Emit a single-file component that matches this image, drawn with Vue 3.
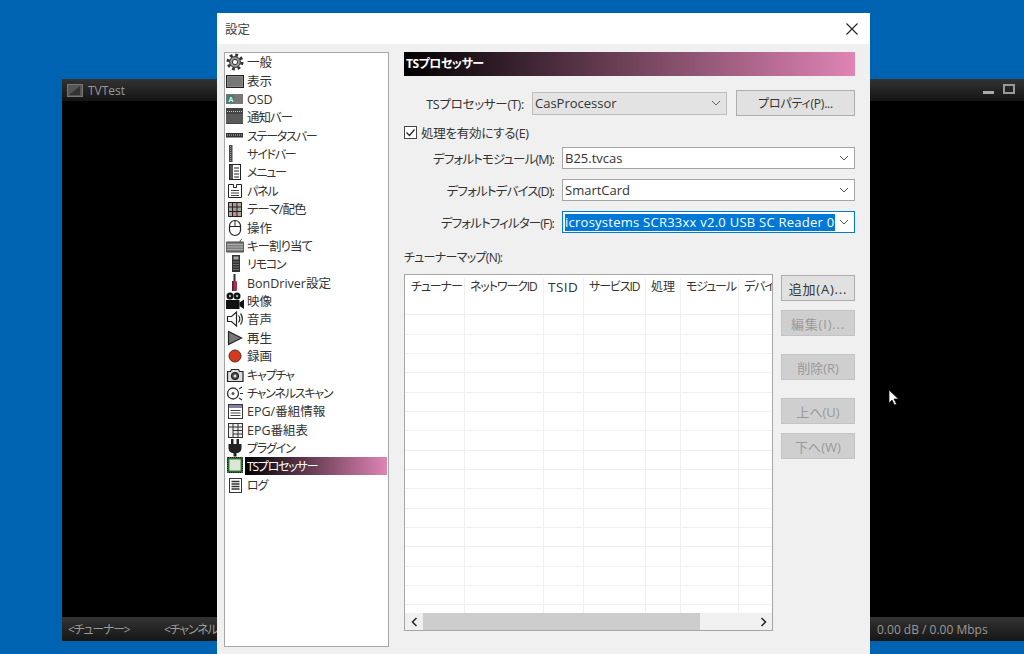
<script setup>
const d = 'stroke="#2b2b2b" fill="none"'
const icons = {
  gear: `<circle cx="9" cy="9" r="7" fill="none" stroke="#333" stroke-width="3" stroke-dasharray="2.8 2.7"/><circle cx="9" cy="9" r="5.4" fill="#999" stroke="#333"/><circle cx="9" cy="9" r="2.6" fill="#fff" stroke="#333"/>`,
  monitor: `<rect x=".5" y="3.500" width="17" height="12" fill="#8a8a8a" stroke="#222"/><rect x="2" y="5" width="14" height="9" fill="#777"/>`,
  osd: `<rect y="4" width="17" height="10" fill="#777"/><rect x="1" y="5" width="7" height="8" fill="#3f7f78"/><text x="2.500" y="12" font-size="7" font-weight="700" fill="#cfe">A</text>`,
  notify: `<rect y="0" width="17" height="16" fill="#444"/><path d="M1 3.500h15" stroke="#ccc" stroke-dasharray="1 1"/><rect y="6" width="17" height="9" fill="#5a5a5a"/>`,
  status: `<rect y="6" width="17" height="4.500" fill="#333"/><path d="M1 8h15" stroke="#ccc" stroke-dasharray="1 1"/>`,
  side: `<rect x="3" y="0" width="3.500" height="17" fill="#444"/><path d="M4.700 1v15" stroke="#bbb" stroke-dasharray="1 1"/>`,
  menu: `<rect x="3.500" y="1.500" width="11" height="15" fill="#fff" stroke="#222"/><rect x="4" y="2" width="3" height="14" fill="#555"/><path d="M8 5h5M8 8h5M8 11h5M8 14h5" stroke="#222"/>`,
  panel: `<path d="M2.500 2.500h5v3h3v-3h5v13h-13z" fill="#fff" stroke="#222"/><path d="M5 8.500h8M5 11h8M5 13.500h8" stroke="#444"/>`,
  theme: `<rect x="2.500" y="2.500" width="13" height="14" fill="#b8a58f" stroke="#222"/><rect x="3" y="7" width="12" height="4.500" fill="#8fb3a0"/><rect x="7" y="3" width="4" height="13" fill="#b88f96"/><path d="M6.500 2.500v14M11 2.500v14M2.500 7h13M2.500 11.500h13" stroke="#222"/>`,
  mouse: `<rect x="3.500" y="1.500" width="11" height="15" rx="5.500" fill="#fff" stroke="#222" stroke-width="1.200"/><path d="M3.500 7.500h11M9 1.500v6" stroke="#222"/>`,
  keys: `<rect y="5" width="18" height="10" rx="1" fill="#7c7c7c" stroke="#444"/><path d="M1.500 7.500h15M1.500 10h15M1.500 12.500h15" stroke="#ddd" stroke-dasharray="1 1"/><path d="M14 5c0-2 1-2 2-3" stroke="#444" fill="none"/>`,
  remote: `<rect x="6" y="0" width="8" height="17" fill="#333"/><rect x="7.500" y="1.500" width="5" height="3" fill="#aaa"/><path d="M7.500 7h5M7.500 9.500h5M7.500 12h5M7.500 14.500h5" stroke="#aaa" stroke-dasharray="1 1"/>`,
  bon: `<rect x="7.500" y="0" width="2" height="7" fill="#333"/><rect x="6" y="7" width="5" height="10" rx="1" fill="#a3324e"/><rect x="6" y="7" width="1.500" height="10" fill="#5c1a2a"/>`,
  video: `<circle cx="4" cy="4" r="3.500" fill="#111"/><circle cx="11" cy="4" r="3.500" fill="#111"/><circle cx="4" cy="4" r="1.200" fill="#aaa"/><circle cx="11" cy="4" r="1.200" fill="#aaa"/><rect y="8" width="13.500" height="9" fill="#111"/><path d="M13.500 10.500l4.500-3v9.500l-4.500-3z" fill="#111"/>`,
  sound: `<path d="M1.500 6.500h4l5-4.500v14l-5-4.500h-4z" fill="#fff" stroke="#222" stroke-width="1.200"/><path d="M12.500 5.500c1.500 2 1.500 5 0 7M14.500 3.500c2.500 3 2.500 8 0 11" ${d} stroke-width="1.200"/>`,
  play: `<path d="M2.500 2.500v13l13-6.500z" fill="#777" stroke="#222" stroke-width="1.200"/>`,
  rec: `<circle cx="9" cy="9" r="6" fill="#d63a1e" stroke="#4a2a22"/>`,
  camera: `<path d="M1.500 5.500h3l1-2h7l1 2h3.500v10h-15.500z" fill="#ddd" stroke="#222" stroke-width="1.200"/><circle cx="9" cy="10" r="3.700" fill="#444" stroke="#222"/><circle cx="9" cy="10" r="1.500" fill="#ddd"/>`,
  dish: `<circle cx="7" cy="9.500" r="5.500" fill="#fff" stroke="#333" stroke-width="1.300"/><circle cx="7" cy="9.500" r="1.500" fill="#555"/><path d="M13 5l3-2M14 9.500h3M13 14l3 2" stroke="#333" stroke-width="1.200"/>`,
  info: `<rect x="2.500" y="2.500" width="14" height="14" fill="#fff" stroke="#333"/><rect x="3" y="3" width="13" height="3" fill="#8a7ca8"/><path d="M4.500 8.500h10M4.500 11h10M4.500 13.500h10" stroke="#444"/>`,
  table: `<rect x="2.500" y="2.500" width="14" height="14" fill="#eee" stroke="#333"/><path d="M7 2.500v14M12 2.500v14M2.500 6h14M7 9.500h9M7 13h9" stroke="#333"/>`,
  plug: `<rect x="5" y="0" width="2.500" height="5" fill="#222"/><rect x="10.500" y="0" width="2.500" height="5" fill="#222"/><path d="M2.500 5h13v4c0 3-2 5-5 5v3.500h-3v-3.500c-3 0-5-2-5-5z" fill="#222"/>`,
  chip: `<rect x="1.500" y=".5" width="15" height="15" fill="#1d5a20" stroke="#111" stroke-dasharray="1.500 .6"/><rect x="3" y="2" width="12" height="12" fill="#dbe6d8" stroke="#2f8a2f"/>`,
  log: `<rect x="3.500" y="2.500" width="12" height="14" fill="#fff" stroke="#333"/><path d="M5.500 5.500h8M5.500 8h8M5.500 10.500h8M5.500 13h8" stroke="#333" stroke-width="1.300"/>`
}
const items = [
  ['一般', 'gear'], ['表示', 'monitor'], ['OSD', 'osd'], ['通知バー', 'notify'], ['ステータスバー', 'status'],
  ['サイドバー', 'side'], ['メニュー', 'menu'], ['パネル', 'panel'], ['テーマ/配色', 'theme'], ['操作', 'mouse'],
  ['キー割り当て', 'keys'], ['リモコン', 'remote'], ['BonDriver設定', 'bon'], ['映像', 'video'], ['音声', 'sound'],
  ['再生', 'play'], ['録画', 'rec'], ['キャプチャ', 'camera'], ['チャンネルスキャン', 'dish'], ['EPG/番組情報', 'info'],
  ['EPG番組表', 'table'], ['プラグイン', 'plug'], ['TSプロセッサー', 'chip'], ['ログ', 'log']
]
const hasKana = (s) => /[\u30a0-\u30ff]/.test(s)
const hasKanji = (s) => /[\u4e00-\u9fff]/.test(s)
const textClass = (s) => ({
  narrow: hasKana(s) && !hasKanji(s),
  mixed: hasKana(s) && hasKanji(s)
})
const selects = [
  { label: 'デフォルトモジュール(M):', value: 'B25.tvcas' },
  { label: 'デフォルトデバイス(D):', value: 'SmartCard' },
  { label: 'デフォルトフィルター(F):', value: 'icrosystems SCR33xx v2.0 USB SC Reader 0', focus: true }
]
const columns = ['チューナー', 'ネットワークID', 'TSID', 'サービスID', '処理', 'モジュール', 'デバイス']
const rows = Array.from({ length: 17 })
const side = [
  { text: '追加(A)...', top: 1, ell: true },
  { text: '編集(I)...', top: 9, off: true, ell: true },
  { text: '削除(R)', top: 18, off: true },
  { text: '上へ(U)', top: 18, off: true },
  { text: '下へ(W)', top: 9, off: true }
]
</script>

<template>
  <div class="desktop">
    <div class="tv">
      <div class="tv-title">
        <svg class="tv-icon" width="16" height="13" viewBox="0 0 16 13"><rect x=".5" y=".5" width="15" height="12" fill="#555" stroke="#777"/><path d="M2 11l11-9v9z" fill="#333"/></svg>
        <span>TVTest</span>
        <span class="tv-min"></span>
        <span class="tv-max"></span>
      </div>
      <div class="tv-video"></div>
      <div class="tv-status">
        <span class="st-a narrow">&lt;チューナー&gt;</span>
        <span class="narrow">&lt;チャンネル</span>
        <span class="st-r">0.00 dB / 0.00 Mbps</span>
      </div>
    </div>

    <svg class="cursor" width="12" height="17" viewBox="0 0 12 17"><path d="M1 1v13l3-3 2.500 5 2-1-2.500-5h4.500z" fill="#fff" stroke="#111" stroke-width=".7"/></svg>

    <div class="dialog">
      <div class="dlg-title">
        <span>設定</span>
        <svg width="12" height="12" viewBox="0 0 12 12"><path d="M.5.500l11 11M11.500.500l-11 11" stroke="#222" stroke-width="1.100"/></svg>
      </div>
      <div class="dlg-body">
        <ul class="nav">
          <li v-for="it in items" :key="it[0]" class="nav-item">
            <svg class="nav-icon" width="18" height="18" viewBox="0 0 18 18" v-html="icons[it[1]]"></svg>
            <span class="nav-text" :class="[textClass(it[0]), { sel: it[1] === 'chip' }]">{{ it[0] }}</span>
          </li>
        </ul>

        <div class="pane">
          <div class="pane-head">TSプロセッサー</div>

          <div class="row-top">
            <label class="lbl lbl-top">TSプロセッサー(T):</label>
            <div class="combo combo-off">
              <span>CasProcessor</span>
              <svg width="10" height="6" viewBox="0 0 10 6"><path d="M1 1l4 4 4-4" fill="none" stroke="#666"/></svg>
            </div>
            <button class="btn btn-prop">プロパティ(P)...</button>
          </div>

          <div class="check">
            <svg width="13" height="13" viewBox="0 0 13 13"><rect x=".5" y=".5" width="12" height="12" fill="#fff" stroke="#444"/><path d="M2.500 6.500l3 3 5-6" fill="none" stroke="#222" stroke-width="1.200"/></svg>
            <span>処理を有効にする(E)</span>
          </div>

          <div v-for="s in selects" :key="s.label" class="row">
            <label class="lbl">{{ s.label }}</label>
            <div class="combo" :class="{ focus: s.focus }">
              <span :class="{ hilite: s.focus }">{{ s.value }}</span>
              <svg width="10" height="6" viewBox="0 0 10 6"><path d="M1 1l4 4 4-4" fill="none" stroke="#555"/></svg>
            </div>
          </div>

          <div class="map-label">チューナーマップ(N):</div>

          <div class="map">
            <div class="lv">
              <div class="lv-grid">
                <div class="lv-row lv-head">
                  <span v-for="c in columns" :key="c" class="lv-cell" :class="hasKana(c) ? 'tight' : hasKanji(c) ? '' : 'wide'">{{ c }}</span>
                </div>
                <div v-for="(r, i) in rows" :key="i" class="lv-row lv-line">
                  <span v-for="c in columns" :key="c" class="lv-cell"></span>
                </div>
              </div>
              <div class="sb">
                <span class="sb-arrow"><svg width="7" height="10" viewBox="0 0 7 10"><path d="M5.500 1l-4 4 4 4" fill="none" stroke="#222" stroke-width="1.500"/></svg></span>
                <span class="sb-track"><span class="sb-thumb"></span></span>
                <span class="sb-arrow"><svg width="7" height="10" viewBox="0 0 7 10"><path d="M1.500 1l4 4-4 4" fill="none" stroke="#222" stroke-width="1.500"/></svg></span>
              </div>
            </div>
            <div class="side">
              <button v-for="b in side" :key="b.text" class="btn btn-side" :class="{ off: b.off, ell: b.ell }" :style="{ marginTop: b.top + 'px' }">{{ b.text }}</button>
            </div>
          </div>
        </div>
      </div>
    </div>
  </div>
</template>

<style>
html, body { margin: 0; padding: 0; background: #0063b1; }
</style>

<style scoped>
.desktop {
  position: relative;
  width: 1024px;
  height: 654px;
  overflow: hidden;
  background: #0063b1;
  font-family: "Open Sans", "Noto Sans CJK JP", sans-serif;
  font-feature-settings: "palt";
  font-size: 12.5px;
  color: #222;
}
.narrow { font-size: 12px; letter-spacing: -1.2px; }
.mixed { letter-spacing: -1px; }

.tv {
  position: absolute;
  left: 62px;
  top: 79px;
  width: 962px;
  height: 562px;
  display: flex;
  flex-direction: column;
  background: #000;
  color: #a8a8a8;
  font-size: 12px;
}
.tv-title {
  height: 22px;
  display: flex;
  align-items: center;
  padding: 0 9px 0 5px;
  background: linear-gradient(#333, #141414);
  color: #999;
}
.tv-icon { margin-right: 5px; }
.tv-min { width: 11px; height: 3px; margin: 4px 9px 0 auto; background: #aaa; }
.tv-max { width: 8px; height: 6px; border: 2px solid #999; margin-bottom: 2px; }
.tv-video { flex: 1; background: #000; }
.tv-status {
  height: 24px;
  display: flex;
  align-items: center;
  padding-left: 6px;
  background: linear-gradient(#333, #161616);
  color: #999;
}
.st-a { width: 96px; }
.st-r { margin-left: auto; width: 147px; }

.cursor { position: absolute; left: 888px; top: 389px; }

.dialog {
  position: absolute;
  left: 217px;
  top: 13px;
  width: 653px;
  height: 641px;
  display: flex;
  flex-direction: column;
  background: #f0f0f0;
}
.dlg-title {
  height: 31px;
  flex: none;
  display: flex;
  align-items: center;
  justify-content: space-between;
  padding: 0 12px 0 8px;
  background: #fff;
  color: #444;
}
.dlg-body {
  flex: 1;
  display: flex;
  padding: 8px 0 0 7px;
}

.nav {
  width: 165px;
  height: 595px;
  box-sizing: border-box;
  margin: 0 15px 0 0;
  padding: 0;
  list-style: none;
  background: #fff;
  border: 1px solid #a6a6a6;
}
.nav-item {
  height: 18.39px;
  display: flex;
  align-items: center;
  padding-left: 1px;
}
.nav-icon { flex: none; margin-right: 1px; }
.nav-text {
  flex: 1;
  height: 18px;
  line-height: 20px;
  padding-left: 2px;
  margin-right: 1px;
  color: #333;
  white-space: nowrap;
}
.nav-text.sel {
  color: #fff;
  background: linear-gradient(90deg, #000, #e084b4);
}

.pane { width: 451px; display: flex; flex-direction: column; }
.pane-head {
  height: 24px;
  line-height: 24px;
  padding-left: 2px;
  font-size: 12px;
  font-weight: 700;
  letter-spacing: -0.5px;
  color: #fff;
  background: linear-gradient(90deg, #000, #e084b4);
}
.row-top {
  display: flex;
  align-items: center;
  margin-top: 14px;
  height: 26px;
}
.lbl { flex: none; width: 150px; text-align: right; margin-right: 8px; white-space: nowrap; color: #333; letter-spacing: -0.85px; }
.lbl-top { width: 120px; letter-spacing: -0.25px; }
.combo {
  flex: 1;
  height: 22px;
  box-sizing: border-box;
  display: flex;
  align-items: center;
  justify-content: space-between;
  padding: 0 5px 0 2px;
  background: #fff;
  border: 1px solid #a5a5a5;
  overflow: hidden;
  white-space: nowrap;
  font-size: 13px;
  color: #333;
}
.combo-off { flex: none; width: 195px; height: 23px; background: #e3e3e3; border-color: #bdbdbd; }
.focus { border-color: #0078d7; }
.hilite {
  width: 270px;
  overflow: hidden;
  background: #0078d7;
  color: #fff;
  line-height: 17px;
  letter-spacing: 0.25px;
}
.btn {
  font-family: inherit;
  font-feature-settings: inherit;
  font-size: 12px;
  color: #333;
  background: #e1e1e1;
  border: 1px solid #adadad;
  padding: 0;
}
.btn-prop { flex: none; width: 119px; height: 26px; margin-left: 9px; letter-spacing: -0.2px; }
.check {
  display: flex;
  align-items: center;
  gap: 4px;
  height: 16px;
  margin: 8px 0 7px;
  color: #333;
  letter-spacing: -0.25px;
}
.row { display: flex; align-items: center; height: 22px; margin-bottom: 10px; }
.map-label { height: 16px; line-height: 16px; margin-top: 7px; font-size: 12px; color: #333; letter-spacing: -0.7px; }
.map { display: flex; gap: 8px; margin-top: 8px; height: 357px; }
.lv {
  width: 369px;
  box-sizing: border-box;
  display: flex;
  flex-direction: column;
  background: #fff;
  border: 1px solid #a6a6a6;
}
.lv-grid { flex: 1; min-height: 0; overflow: hidden; }
.lv-row {
  display: grid;
  grid-template-columns: 60px 79px 40px 62px 35px 58px 33px;
}
.lv-head { height: 21px; box-sizing: border-box; padding-top: 3px; line-height: 18px; font-size: 12px; }
.lv-line { height: 19.33px; box-sizing: border-box; border-bottom: 1px solid #efefef; }
.lv-cell {
  box-sizing: border-box;
  border-right: 1px solid #f0f0f0;
  padding-left: 5px;
  white-space: nowrap;
  color: #333;
}
.lv-cell:first-child { padding-left: 6px; }
.tight { letter-spacing: -1.1px; }
.wide { font-size: 13.5px; letter-spacing: 0.5px; padding-left: 4px; }
.lv-row .lv-cell:last-child { border-right: 0; }
.sb { flex: none; height: 17px; display: flex; background: #f0f0f0; }
.sb-arrow { flex: none; width: 18px; display: flex; align-items: center; justify-content: center; }
.sb-track { flex: 1; display: flex; }
.sb-thumb { width: 277px; background: #cdcdcd; }
.side { display: flex; flex-direction: column; width: 74px; }
.btn-side { height: 26px; flex: none; font-size: 13px; }
.ell { letter-spacing: 0.8px; }
.off { background: #cfcfcf; border-color: #c4c4c4; color: #9a9a9a; }
</style>
